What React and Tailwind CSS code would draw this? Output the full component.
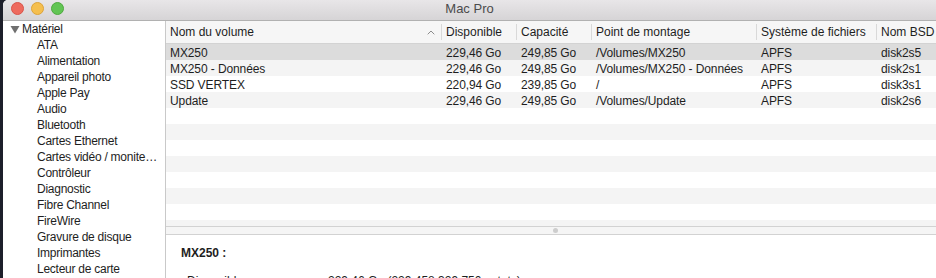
import React from "react";

const cols = [
  { w: "w-[275px]", label: "Nom du volume" },
  { w: "w-[75px]", label: "Disponible" },
  { w: "w-[75px]", label: "Capacité" },
  { w: "w-[165px]", label: "Point de montage" },
  { w: "w-[120px]", label: "Système de fichiers" },
  { w: "w-[80px]", label: "Nom BSD" },
];

const rows = [
  ["MX250", "229,46 Go", "249,85 Go", "/Volumes/MX250", "APFS", "disk2s5"],
  ["MX250 - Données", "229,46 Go", "249,85 Go", "/Volumes/MX250 - Données", "APFS", "disk2s1"],
  ["SSD VERTEX", "220,94 Go", "239,85 Go", "/", "APFS", "disk3s1"],
  ["Update", "229,46 Go", "249,85 Go", "/Volumes/Update", "APFS", "disk2s6"],
];

const sidebarItems = [
  "ATA",
  "Alimentation",
  "Appareil photo",
  "Apple Pay",
  "Audio",
  "Bluetooth",
  "Cartes Ethernet",
  "Cartes vidéo / monite…",
  "Contrôleur",
  "Diagnostic",
  "Fibre Channel",
  "FireWire",
  "Gravure de disque",
  "Imprimantes",
  "Lecteur de carte",
];

export default function App() {
  const font = { fontFamily: '"Liberation Sans", Arial, sans-serif' };
  return (
    <div
      className="w-[936px] h-[278px] overflow-hidden bg-[#1d1f2a] pl-[3px] text-[12px] leading-[16px] text-[#1e1e1e]"
      style={font}
    >
      <div className="flex h-full flex-col overflow-hidden rounded-tl-[5px] bg-white">
        {/* Title bar */}
        <div className="relative flex h-[21px] shrink-0 items-center border-b border-[#b1b1b1] bg-gradient-to-b from-[#e8e6e8] to-[#d6d4d6] pb-[3px] pl-[8px]">
          <div className="flex items-center gap-[7px]">
            <span className="h-[13px] w-[13px] rounded-full border border-[#d8544a] bg-[#ee6a5e]" />
            <span className="h-[13px] w-[13px] rounded-full border border-[#dca33a] bg-[#f5bf4f]" />
            <span className="h-[13px] w-[13px] rounded-full border border-[#4fa83f] bg-[#62c554]" />
          </div>
          <div className="pointer-events-none absolute inset-0 flex items-center justify-center pb-[2px] text-[13px] text-[#4b4b4b]">
            Mac Pro
          </div>
        </div>

        {/* Body */}
        <div className="flex min-h-0 flex-1">
          {/* Sidebar */}
          <div className="w-[163px] shrink-0 border-r border-[#c9c9c9] bg-white tracking-[-0.25px]">
            <div className="flex h-[16px] items-center pl-[7px]">
              <svg width="10" height="9" viewBox="0 0 10 9" className="mr-[2px]">
                <path d="M0.5 1 L9.5 1 L5 8.5 Z" fill="#6f6f6f" />
              </svg>
              <span>Matériel</span>
            </div>
            {sidebarItems.map((s) => (
              <div key={s} className="h-[16px] whitespace-nowrap pl-[34px]">
                {s}
              </div>
            ))}
          </div>

          {/* Right panel */}
          <div className="flex min-w-0 flex-1 flex-col">
            {/* Table */}
            <div className="flex h-[205px] shrink-0 flex-col overflow-hidden">
              <div className="flex h-[23px] shrink-0 items-center border-b border-[#d3d3d3] bg-[#f6f6f6]">
                {cols.map((c, i) => (
                  <div
                    key={c.label}
                    className={`${c.w} flex h-[16px] shrink-0 items-center whitespace-nowrap pl-[4px] pr-[6px] ${
                      i > 0 ? "border-l border-[#d9d9d9]" : ""
                    }`}
                  >
                    <span className="flex-1">{c.label}</span>
                    {i === 0 && (
                      <svg width="8" height="5" viewBox="0 0 8 5">
                        <path d="M0.7 4.3 L4 1 L7.3 4.3" fill="none" stroke="#8c8c8c" strokeWidth="1" />
                      </svg>
                    )}
                  </div>
                ))}
              </div>
              {Array.from({ length: 12 }).map((_, r) => {
                const d = rows[r];
                const bg =
                  r === 0 ? "bg-[#dcdcdc]" : r % 2 === 1 ? "bg-[#f4f4f4]" : "bg-white";
                return (
                  <div key={r} className={`flex h-[16px] shrink-0 items-center pt-[1px] ${bg}`}>
                    {d &&
                      d.map((v, i) => (
                        <div
                          key={i}
                          className={`${cols[i].w} shrink-0 whitespace-nowrap tracking-[-0.1px] ${i === 0 ? "pl-[4px]" : "pl-[5px]"}`}
                        >
                          {v}
                        </div>
                      ))}
                  </div>
                );
              })}
            </div>

            {/* Splitter */}
            <div className="flex h-[9px] shrink-0 items-center justify-center border-y border-[#d2d2d2] bg-[#f5f5f5]">
              <span className="ml-[8px] h-[5px] w-[5px] rounded-full bg-[#cdcdcd]" />
            </div>

            {/* Detail */}
            <div className="min-h-0 flex-1 pl-[15px] pt-[10px]">
              <div className="font-bold">MX250 :</div>
              <div className="mt-[12px] flex whitespace-nowrap pl-[6px]">
                <span className="w-[141px]">Disponible :</span>
                <span>229,46 Go (229 458 329 750 octets)</span>
              </div>
            </div>
          </div>
        </div>
      </div>
    </div>
  );
}
